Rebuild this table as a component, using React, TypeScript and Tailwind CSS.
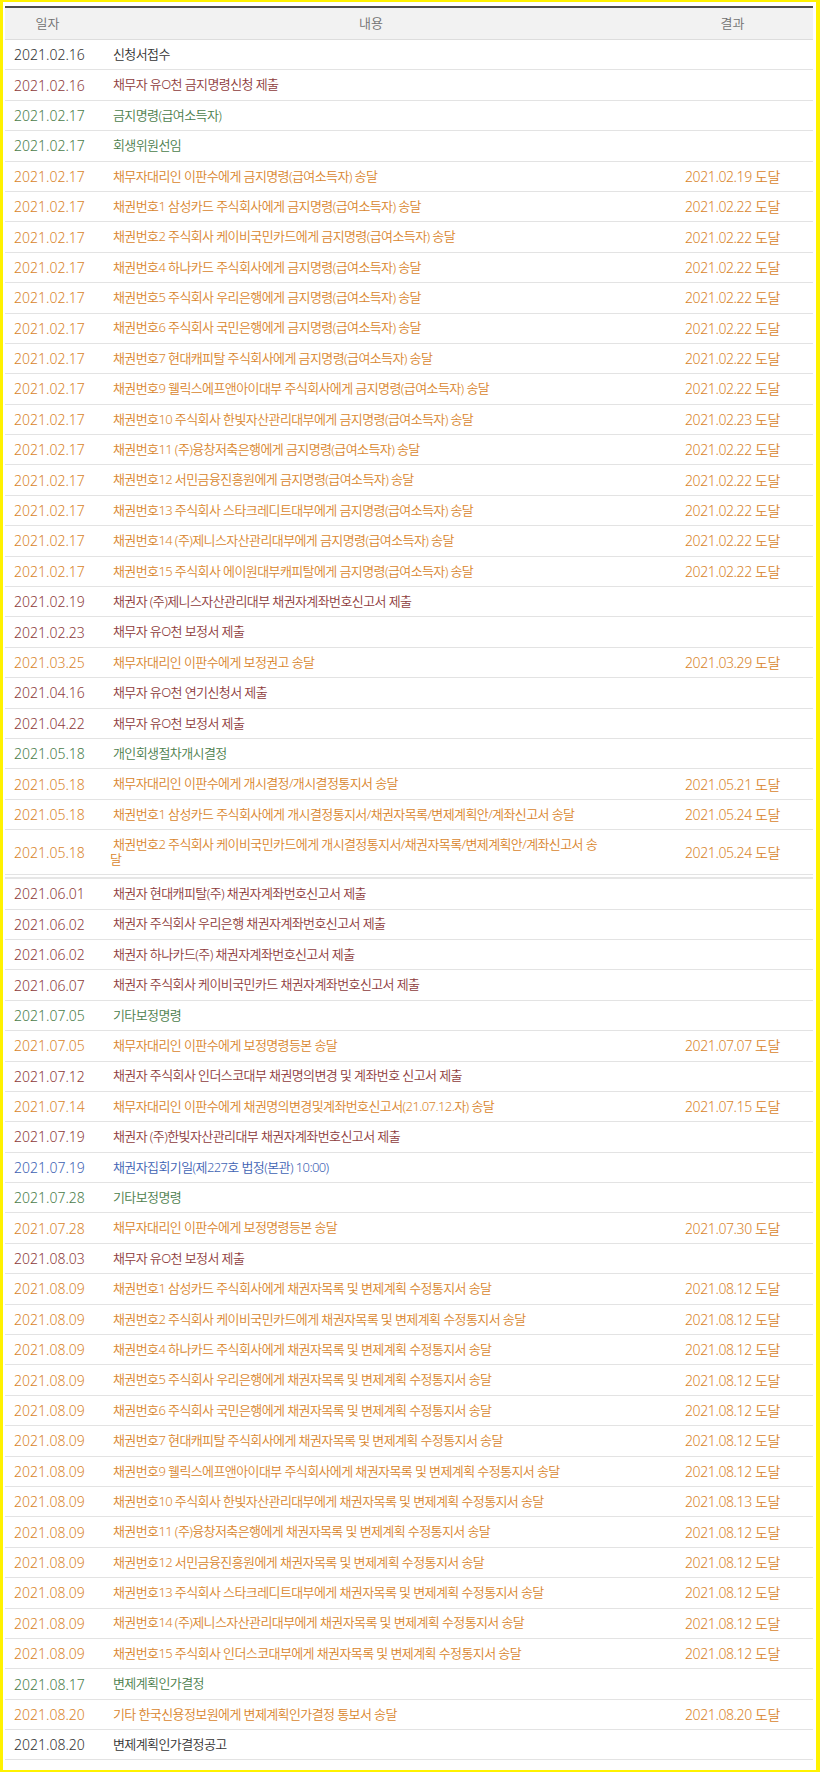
// 사건 진행내역 table — 일자 / 내용 / 결과

type Kind = "k" | "r" | "g" | "o" | "b"

type Row = { date: string; text: string; kind: Kind; result?: string; wrap?: [string, string] }

const COLOR: Record<Kind, string> = {
  k: "text-[#333333]",
  r: "text-[#8e3b3b]",
  g: "text-[#4b7d4b]",
  o: "text-[#d9852c]",
  b: "text-[#3e62b3]",
}

const first: Row[] = [
  { date: "2021.02.16", text: "신청서접수", kind: "k" },
  { date: "2021.02.16", text: "채무자 유O천 금지명령신청 제출", kind: "r" },
  { date: "2021.02.17", text: "금지명령(급여소득자)", kind: "g" },
  { date: "2021.02.17", text: "회생위원선임", kind: "g" },
  { date: "2021.02.17", text: "채무자대리인 이판수에게 금지명령(급여소득자) 송달", kind: "o", result: "2021.02.19 도달" },
  { date: "2021.02.17", text: "채권번호1 삼성카드 주식회사에게 금지명령(급여소득자) 송달", kind: "o", result: "2021.02.22 도달" },
  { date: "2021.02.17", text: "채권번호2 주식회사 케이비국민카드에게 금지명령(급여소득자) 송달", kind: "o", result: "2021.02.22 도달" },
  { date: "2021.02.17", text: "채권번호4 하나카드 주식회사에게 금지명령(급여소득자) 송달", kind: "o", result: "2021.02.22 도달" },
  { date: "2021.02.17", text: "채권번호5 주식회사 우리은행에게 금지명령(급여소득자) 송달", kind: "o", result: "2021.02.22 도달" },
  { date: "2021.02.17", text: "채권번호6 주식회사 국민은행에게 금지명령(급여소득자) 송달", kind: "o", result: "2021.02.22 도달" },
  { date: "2021.02.17", text: "채권번호7 현대캐피탈 주식회사에게 금지명령(급여소득자) 송달", kind: "o", result: "2021.02.22 도달" },
  { date: "2021.02.17", text: "채권번호9 웰릭스에프앤아이대부 주식회사에게 금지명령(급여소득자) 송달", kind: "o", result: "2021.02.22 도달" },
  { date: "2021.02.17", text: "채권번호10 주식회사 한빛자산관리대부에게 금지명령(급여소득자) 송달", kind: "o", result: "2021.02.23 도달" },
  { date: "2021.02.17", text: "채권번호11 (주)융창저축은행에게 금지명령(급여소득자) 송달", kind: "o", result: "2021.02.22 도달" },
  { date: "2021.02.17", text: "채권번호12 서민금융진흥원에게 금지명령(급여소득자) 송달", kind: "o", result: "2021.02.22 도달" },
  { date: "2021.02.17", text: "채권번호13 주식회사 스타크레디트대부에게 금지명령(급여소득자) 송달", kind: "o", result: "2021.02.22 도달" },
  { date: "2021.02.17", text: "채권번호14 (주)제니스자산관리대부에게 금지명령(급여소득자) 송달", kind: "o", result: "2021.02.22 도달" },
  { date: "2021.02.17", text: "채권번호15 주식회사 에이원대부캐피탈에게 금지명령(급여소득자) 송달", kind: "o", result: "2021.02.22 도달" },
  { date: "2021.02.19", text: "채권자 (주)제니스자산관리대부 채권자계좌번호신고서 제출", kind: "r" },
  { date: "2021.02.23", text: "채무자 유O천 보정서 제출", kind: "r" },
  { date: "2021.03.25", text: "채무자대리인 이판수에게 보정권고 송달", kind: "o", result: "2021.03.29 도달" },
  { date: "2021.04.16", text: "채무자 유O천 연기신청서 제출", kind: "r" },
  { date: "2021.04.22", text: "채무자 유O천 보정서 제출", kind: "r" },
  { date: "2021.05.18", text: "개인회생절차개시결정", kind: "g" },
  { date: "2021.05.18", text: "채무자대리인 이판수에게 개시결정/개시결정통지서 송달", kind: "o", result: "2021.05.21 도달" },
  { date: "2021.05.18", text: "채권번호1 삼성카드 주식회사에게 개시결정통지서/채권자목록/변제계획안/계좌신고서 송달", kind: "o", result: "2021.05.24 도달" },
  {
    date: "2021.05.18",
    text: "",
    kind: "o",
    result: "2021.05.24 도달",
    wrap: ["채권번호2 주식회사 케이비국민카드에게 개시결정통지서/채권자목록/변제계획안/계좌신고서 송", "달"],
  },
]

const notice = "채권자목록 및 변제계획 수정통지서 송달"

const second: Row[] = [
  { date: "2021.06.01", text: "채권자 현대캐피탈(주) 채권자계좌번호신고서 제출", kind: "r" },
  { date: "2021.06.02", text: "채권자 주식회사 우리은행 채권자계좌번호신고서 제출", kind: "r" },
  { date: "2021.06.02", text: "채권자 하나카드(주) 채권자계좌번호신고서 제출", kind: "r" },
  { date: "2021.06.07", text: "채권자 주식회사 케이비국민카드 채권자계좌번호신고서 제출", kind: "r" },
  { date: "2021.07.05", text: "기타보정명령", kind: "g" },
  { date: "2021.07.05", text: "채무자대리인 이판수에게 보정명령등본 송달", kind: "o", result: "2021.07.07 도달" },
  { date: "2021.07.12", text: "채권자 주식회사 인더스코대부 채권명의변경 및 계좌번호 신고서 제출", kind: "r" },
  { date: "2021.07.14", text: "채무자대리인 이판수에게 채권명의변경및계좌번호신고서(21.07.12.자) 송달", kind: "o", result: "2021.07.15 도달" },
  { date: "2021.07.19", text: "채권자 (주)한빛자산관리대부 채권자계좌번호신고서 제출", kind: "r" },
  { date: "2021.07.19", text: "채권자집회기일(제227호 법정(본관) 10:00)", kind: "b" },
  { date: "2021.07.28", text: "기타보정명령", kind: "g" },
  { date: "2021.07.28", text: "채무자대리인 이판수에게 보정명령등본 송달", kind: "o", result: "2021.07.30 도달" },
  { date: "2021.08.03", text: "채무자 유O천 보정서 제출", kind: "r" },
  { date: "2021.08.09", text: `채권번호1 삼성카드 주식회사에게 ${notice}`, kind: "o", result: "2021.08.12 도달" },
  { date: "2021.08.09", text: `채권번호2 주식회사 케이비국민카드에게 ${notice}`, kind: "o", result: "2021.08.12 도달" },
  { date: "2021.08.09", text: `채권번호4 하나카드 주식회사에게 ${notice}`, kind: "o", result: "2021.08.12 도달" },
  { date: "2021.08.09", text: `채권번호5 주식회사 우리은행에게 ${notice}`, kind: "o", result: "2021.08.12 도달" },
  { date: "2021.08.09", text: `채권번호6 주식회사 국민은행에게 ${notice}`, kind: "o", result: "2021.08.12 도달" },
  { date: "2021.08.09", text: `채권번호7 현대캐피탈 주식회사에게 ${notice}`, kind: "o", result: "2021.08.12 도달" },
  { date: "2021.08.09", text: `채권번호9 웰릭스에프앤아이대부 주식회사에게 ${notice}`, kind: "o", result: "2021.08.12 도달" },
  { date: "2021.08.09", text: `채권번호10 주식회사 한빛자산관리대부에게 ${notice}`, kind: "o", result: "2021.08.13 도달" },
  { date: "2021.08.09", text: `채권번호11 (주)융창저축은행에게 ${notice}`, kind: "o", result: "2021.08.12 도달" },
  { date: "2021.08.09", text: `채권번호12 서민금융진흥원에게 ${notice}`, kind: "o", result: "2021.08.12 도달" },
  { date: "2021.08.09", text: `채권번호13 주식회사 스타크레디트대부에게 ${notice}`, kind: "o", result: "2021.08.12 도달" },
  { date: "2021.08.09", text: `채권번호14 (주)제니스자산관리대부에게 ${notice}`, kind: "o", result: "2021.08.12 도달" },
  { date: "2021.08.09", text: `채권번호15 주식회사 인더스코대부에게 ${notice}`, kind: "o", result: "2021.08.12 도달" },
  { date: "2021.08.17", text: "변제계획인가결정", kind: "g" },
  { date: "2021.08.20", text: "기타 한국신용정보원에게 변제계획인가결정 통보서 송달", kind: "o", result: "2021.08.20 도달" },
  { date: "2021.08.20", text: "변제계획인가결정공고", kind: "k" },
]

function TableRow({ row }: { row: Row }) {
  const color = COLOR[row.kind]
  return (
    <div className={`flex items-center border-b border-[#e3e3e3] ${row.wrap ? "h-[45px]" : "h-[30.4px]"} ${color}`}>
      <div className="w-[85px] shrink-0 pl-[9px] text-[14px] whitespace-nowrap">{row.date}</div>
      <div className="flex-1 pl-[20px] text-[13px] tracking-[-0.6px] whitespace-nowrap">
        {row.wrap ? (
          <div className="leading-[15px]">
            <div className="pl-[3px]">{row.wrap[0]}</div>
            <div>{row.wrap[1]}</div>
          </div>
        ) : (
          <span className="pl-[3px]">{row.text}</span>
        )}
      </div>
      <div className="w-[161px] shrink-0 text-center text-[14px] tracking-[-0.4px] whitespace-nowrap">{row.result}</div>
    </div>
  )
}

export default function App() {
  return (
    <div className="bg-white font-['Noto_Sans','Noto_Sans_CJK_KR',sans-serif] font-[350]">
      <div className="border-[#fff200] border-t-2 border-l-[3px] border-r-4 border-b-4 pt-[4px] pl-[2px] pr-[3px] pb-[10px]">
        <div className="border-t-2 border-[#4d4d4d]">
          {/* header */}
          <div className="flex items-center h-[32px] bg-[#f2f2f2] border-b border-[#dddddd] text-[13px] text-[#707070]">
            <div className="w-[85px] shrink-0 text-center">일자</div>
            <div className="flex-1 text-center">내용</div>
            <div className="w-[161px] shrink-0 text-center">결과</div>
          </div>

          {first.map((row, i) => (
            <TableRow key={`a${i}`} row={row} />
          ))}

          {/* page break between the two blocks */}
          <div className="h-[4px] border-b-2 border-[#e6e6e6]" />

          {second.map((row, i) => (
            <TableRow key={`b${i}`} row={row} />
          ))}
        </div>
      </div>
    </div>
  )
}
